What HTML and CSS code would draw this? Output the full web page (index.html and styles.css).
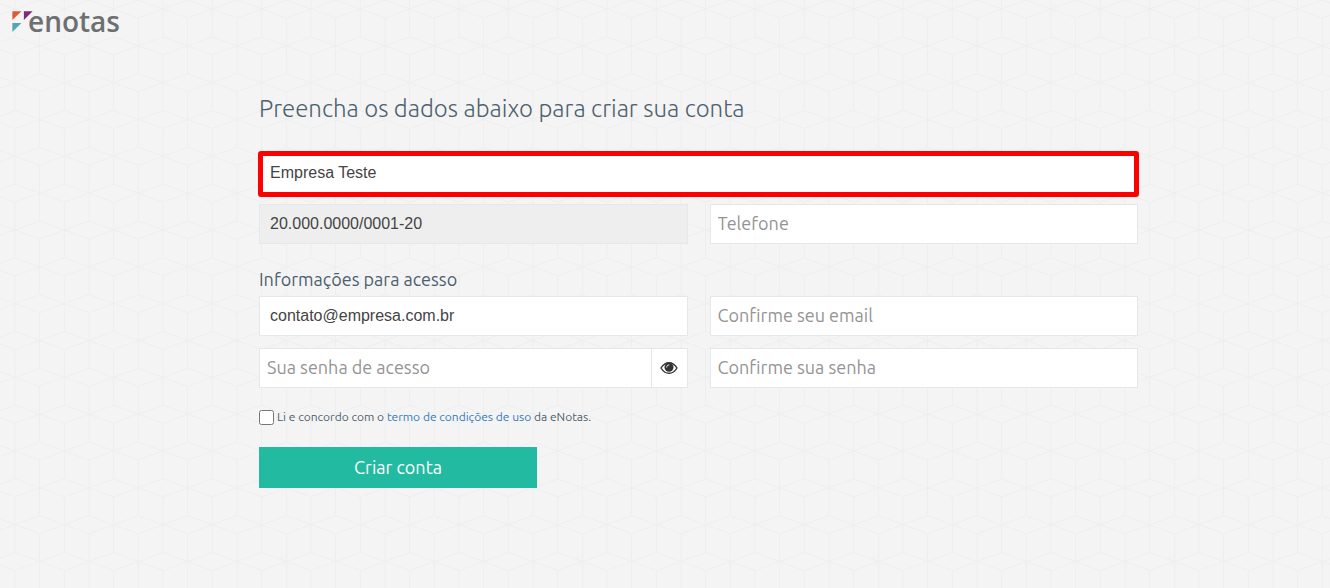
FILE: index.html
```
<!DOCTYPE html>
<html lang="pt-BR">
<head>
  <meta charset="utf-8">
  <meta name="viewport" content="width=device-width, initial-scale=1">
  <title>eNotas - Criar conta</title>
  <link rel="stylesheet" href="styles.css">
</head>
<body>
  <header class="header">
    <a class="logo" href="#">
      <svg class="logo-mark" width="21" height="21" viewBox="0 0 60 60" aria-hidden="true">
        <path fill="#dd5a35" d="M1 1h26L1 26z"/>
        <path fill="#7c2a77" d="M34 1h25L34 26z"/>
        <path fill="#4fa9b3" d="M1 34h26L1 60z"/>
      </svg>
      <span class="logo-text">enotas</span>
    </a>
  </header>

  <main class="signup">
    <h1>Preencha os dados abaixo para criar sua conta</h1>
    <form onsubmit="return false">
      <input class="field filled highlight" type="text" aria-label="Nome da empresa" value="Empresa Teste">
      <div class="row">
        <input class="field filled" type="text" aria-label="CNPJ" value="20.000.0000/0001-20" readonly>
        <input class="field" type="tel" aria-label="Telefone" placeholder="Telefone">
      </div>

      <h2>Informações para acesso</h2>
      <div class="row">
        <input class="field filled" type="text" aria-label="Email" value="contato@empresa.com.br">
        <input class="field" type="text" aria-label="Confirme seu email" placeholder="Confirme seu email">
      </div>
      <div class="row">
        <div class="password">
          <input class="field" id="password" type="password" aria-label="Sua senha de acesso" placeholder="Sua senha de acesso">
          <button class="show-password" type="button" aria-label="Mostrar senha" onclick="togglePassword()">
            <svg width="18" height="14" viewBox="0 0 18 14" aria-hidden="true">
              <path fill="#fff" stroke="#333" stroke-width="1.4" d="M1 7C3 3.700 5.800 1.700 9 1.700S15 3.700 17 7C15 10.300 12.200 12.300 9 12.300S3 10.300 1 7z"/>
              <circle cx="9" cy="6.300" r="4.500" fill="#333"/>
              <path fill="none" stroke="#fff" stroke-linecap="round" d="M6.700 6.100C6.700 4.800 7.600 3.900 8.900 3.900"/>
            </svg>
          </button>
        </div>
        <input class="field" type="password" aria-label="Confirme sua senha" placeholder="Confirme sua senha">
      </div>

      <div class="terms">
        <input type="checkbox" id="terms">
        <label for="terms">Li e concordo com o <a href="#">termo de condições de uso</a> da eNotas.</label>
      </div>
      <button class="submit-button" type="submit">Criar conta</button>
    </form>
  </main>

  <script>
    function togglePassword() {
      const password = document.getElementById("password");
      password.type = password.type === "password" ? "text" : "password";
    }
  </script>
</body>
</html>
```
FILE: styles.css
```
* {
  box-sizing: border-box;
}

body {
  margin: 0;
  min-height: 100vh;
  font-family: Ubuntu, "Noto Sans", sans-serif;
  color: #4d5f6e;
  background-color: #f4f4f4;
  /* cube pattern, 3 x 3 cells in each tile */
  background-image: url("data:image/svg+xml,%3Csvg xmlns='http://www.w3.org/2000/svg' xmlns:xlink='http://www.w3.org/1999/xlink' width='148' height='221' viewBox='0 0 444 663'%3E%3Cdefs%3E%3Cpath id='c' d='M0 0L74 27L148 0M0 221L74 194L148 221M0 0V83.500M0 137.500V221M74 27V194M0 83.500L74 110.500L0 137.500M148 83.500L74 110.500L148 137.500'/%3E%3Cg id='r'%3E%3Cuse xlink:href='%23c'/%3E%3Cuse xlink:href='%23c' x='148'/%3E%3Cuse xlink:href='%23c' x='296'/%3E%3Cuse xlink:href='%23c' x='444'/%3E%3C/g%3E%3C/defs%3E%3Cg fill='none' stroke='%23eeeeee' stroke-width='3'%3E%3Cuse xlink:href='%23r'/%3E%3Cuse xlink:href='%23r' y='221'/%3E%3Cuse xlink:href='%23r' y='442'/%3E%3C/g%3E%3C/svg%3E");
  background-position: 15px 9px;
}

.header {
  height: 44px;
  padding: 0 12px;
}

.logo {
  display: inline-flex;
  height: 42px;
  align-items: center;
  color: #6d6f70;
  text-decoration: none;
}

.logo-mark {
  margin-right: -5px;
}

.logo-text {
  font-family: "Open Sans", sans-serif;
  font-size: 28px;
  font-weight: 600;
  line-height: 40px;
}

.signup {
  margin: 0 192px 0 259px;
  padding: 49px 0 40px;
}

h1 {
  margin: 0 0 26px;
  font-size: 24px;
  font-weight: 300;
  line-height: 32px;
}

h2 {
  margin: 24px 0 6px;
  font-size: 18px;
  font-weight: 400;
  line-height: 22px;
}

.field {
  display: block;
  width: 100%;
  min-width: 0;
  height: 40px;
  padding: 0 7px 2px;
  border: 1px solid #e3e8ea;
  border-radius: 0;
  background-color: #fff;
  color: #444;
  font-family: inherit;
  font-size: 18px;
}

.field::placeholder {
  color: #949494;
  opacity: 1;
}

.filled {
  padding: 0 10px;
  font-family: "Liberation Sans", Arial, sans-serif;
  font-size: 16px;
}

.field:read-only {
  background-color: #eee;
}

.highlight {
  width: calc(100% + 2px);
  height: 46px;
  margin: 0 -1px 7px;
  padding: 0 7px 3px;
  border: 5px solid #f00;
  border-radius: 3px;
}

.row {
  display: grid;
  grid-template-columns: 1fr 1fr;
  gap: 22px;
  margin-bottom: 12px;
}

.row:has(+ h2) {
  margin-bottom: 0;
}

.password {
  display: flex;
  min-width: 0;
}

.show-password {
  display: flex;
  flex: 0 0 36px;
  align-items: center;
  justify-content: center;
  padding: 0;
  border: 1px solid #e3e8ea;
  border-left: 0;
  background-color: #fff;
  cursor: pointer;
}

.terms {
  display: flex;
  align-items: center;
  gap: 3px;
  margin: 20px 0 21px;
  font-size: 12px;
  line-height: 18px;
}

.terms input {
  width: 15px;
  height: 15px;
  margin: 0;
}

a {
  color: #337ab7;
  text-decoration: none;
}

.submit-button {
  width: 278px;
  max-width: 100%;
  height: 41px;
  padding: 0 0 2px;
  border: none;
  background-color: #22baa0;
  color: #fff;
  font-family: inherit;
  font-size: 18px;
  cursor: pointer;
}

.submit-button:hover {
  background-color: #1da88f;
}

@media (max-width: 900px) {
  .signup {
    margin: 0 20px;
  }
}
```
